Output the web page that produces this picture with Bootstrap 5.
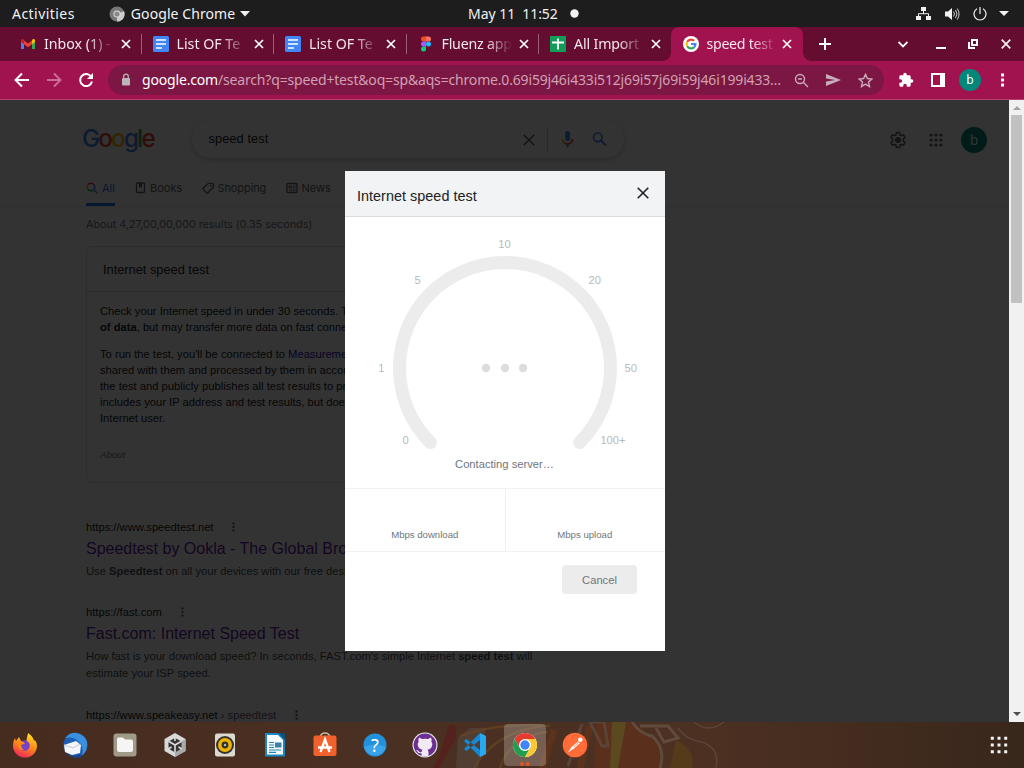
<!DOCTYPE html>
<html lang="en">
<head>
<meta charset="utf-8">
<title>speed test - Google Search</title>
<link href="https://cdn.jsdelivr.net/npm/bootstrap@5.3.0/dist/css/bootstrap.min.css" rel="stylesheet">
<style>
body{width:1024px;height:768px;overflow:hidden;font-family:"Liberation Sans",Arial,sans-serif;font-size:11.2px;line-height:16px;color:#202124;background:#333}
svg{display:block;flex:none}
.ui{font-family:"Noto Sans","Open Sans",sans-serif}
.gs{font-family:Inter,sans-serif}
/* system bar */
.sysbar{height:27px;background:#1d1d1d;color:#f2f2f2;font-size:14px}
.clock{left:468px;top:0;height:27px}
/* tabs */
.tabstrip{height:34px;background:#640d31;padding-left:8px;color:#f3e6ec}
.btab{width:132.5px;padding:0 9.5px 0 12px}
.btab+.btab:before{content:"";position:absolute;left:0;top:7px;height:20px;width:1px;background:#9b6079}
.btab .ttl{width:69px;margin-left:8px;font-size:14.2px;overflow:hidden;white-space:nowrap;-webkit-mask-image:linear-gradient(90deg,#000 64%,transparent 102%);mask-image:linear-gradient(90deg,#000 64%,transparent 102%)}
.btab .x{margin-left:auto}
.btab.on{background:#a0134f;border-radius:8px 8px 0 0;padding-right:11.5px}
.btab.on:before{display:none}
.btab.on:after,.preact:after{content:"";position:absolute;bottom:0;width:8px;height:8px}
.btab.on:after{right:-8px;background:radial-gradient(circle at 100% 0,transparent 7.5px,#a0134f 8px)}
.preact:after{right:0;background:radial-gradient(circle at 0 0,transparent 7.5px,#a0134f 8px)}
/* toolbar */
.toolbar{height:39px;background:#a0134f;border-bottom:1px solid #b8426f;padding:4px 0 4px 14px}
.omni{width:776px;height:30px;border-radius:15px;background:#7b1742;margin-left:14px;padding:0 10px 0 12px}
.url{font-size:14px;letter-spacing:-.17px;color:#d0a0b5;margin-left:10px;width:643px;white-space:nowrap}
.url b{font-weight:400;color:#fff}
.ava{width:22px;height:22px;background:#00897b;color:#fff;font-size:12px;margin-left:14px}
/* page */
.view{height:622px;background:#fff}
.sheet{width:1009px;overflow:hidden}
.shade{inset:0;background:rgba(0,0,0,.8)}
.ghead{height:107px;border-bottom:1px solid #ebebeb;padding-left:82px}
.glogo{font:500 24.2px/30px Inter,sans-serif;letter-spacing:-1.8px;width:110px;color:#4285f4;padding-bottom:2px}
.pill{width:432px;height:37px;border-radius:19px;box-shadow:0 2px 6px 0 rgba(32,33,36,.25);padding:0 17px 0 16.5px;font-size:12.8px}
.gava{width:26px;height:26px;background:#00897b;color:#fff;font-size:14px}
.gnav{font-size:11px;color:#5f6368;height:26px;padding-left:4px}
.gnav span{margin-left:4px}
.gnav .cur{color:#1a73e8;border-bottom:3px solid #1a73e8}
.stats{font-size:10.9px;letter-spacing:-.07px;color:#70757a;padding:8px 0 0 86px;line-height:18px}
.rcard{width:522px;height:237px;margin:13px 0 0 86px;border:1px solid #dadce0;border-radius:6px}
.rcard .hd{height:45px;border-bottom:1px solid #dadce0;font-size:12.8px;padding:2px 0 0 16px}
.rcard .bd{padding:11px 13px;white-space:nowrap}
.rcard p{margin:0 0 11px}
.rcard a{color:#1a0dab;text-decoration:none}
.about{font-size:9.6px;font-style:italic;color:#70757a;margin-top:21px}
.res{margin-left:86px;width:470px}
.res .cite{height:16px}
.res .cite svg{margin-left:19px}
.res h3{font-size:16px;line-height:20px;font-weight:400;color:#681da8;margin:3.5px 0 4px}
.res .sn{color:#4d5156;line-height:17px;white-space:nowrap}
.mdl{width:320px;height:480px;left:345px;top:71px;background:#fff}
.mhead{height:46px;background:#f1f3f4;border-bottom:1px solid #dadce0;font-size:14.4px;letter-spacing:.03px;padding:4px 16px 0 12px}
.mcells{height:64px;border:1px solid #f1f1f1;border-width:1px 0;font-size:9.6px;color:#70757a;padding-right:1px}
.mcells div{padding-bottom:8px}
.mcells div+div{border-left:1px solid #f1f1f1}
.cancel{width:75px;height:29px;background:#ececec;border:0;border-radius:4px;color:#70757a;margin:13px 28px 0 auto;font-size:11.2px;padding:0}
.sbar{width:15px;background:#f1f1f1}
.thumb{width:11px;height:188px;background:#c1c1c1}
/* dock */
.dock{height:46px;background:linear-gradient(90deg,#462b1f,#4a3022 35%,#4c3022 70%,#38271b)}
.dock .it{width:50px;height:46px;z-index:1}
.dock .run{width:42px;height:42px;left:4px;top:2px;border-radius:4px;background:rgba(190,180,170,.36)}
</style>
</head>
<body>
<div class="d-flex flex-column">
<!-- system bar -->
<div class="sysbar ui d-flex align-items-center position-relative">
  <span style="margin-left:12px;letter-spacing:.45px">Activities</span>
  <svg style="margin-left:34px" width="16" height="16" viewBox="0 0 16 16"><circle cx="8" cy="8" r="7.500" fill="#777"/><path d="M8 8 15 5a7.500 7.500 0 0 1-7 10.500z" fill="#ccc"/><circle cx="8" cy="8" r="3.600" fill="#ddd"/><circle cx="8" cy="8" r="2.600" fill="#888"/></svg>
  <span style="margin-left:6px;letter-spacing:.08px">Google Chrome</span>
  <svg style="margin-left:5px" width="10" height="6"><path d="M0 0h10L5 5.500z" fill="#f2f2f2"/></svg>
  <div class="clock position-absolute d-flex align-items-center"><span>May 11</span><span style="margin-left:7px;letter-spacing:-.1px">11:52</span><svg style="margin-left:12px" width="9" height="9"><circle cx="4.500" cy="4.500" r="4.200" fill="#f2f2f2"/></svg></div>
  <div class="ms-auto d-flex align-items-center" style="margin-right:15px">
    <svg width="15" height="14" viewBox="0 0 15 14" fill="#f2f2f2"><path d="M5 0h5v4H5zM0 9h5v4H0zM10 9h5v4h-5z"/><path d="M7.500 4v3M2.500 9V6.700h10V9" stroke="#f2f2f2" fill="none"/></svg>
    <svg style="margin-left:14px" width="15" height="14" viewBox="0 0 15 14"><path d="M0 4.500h3L7 1v12L3 9.500H0z" fill="#f2f2f2"/><path d="M8.500 4.500q2 2.500 0 5M10.500 3q3 4 0 8M12.300 1.500q3.500 5.500 0 11" fill="none" stroke="#ccc"/></svg>
    <svg style="margin-left:13px" width="14" height="14" viewBox="0 0 14 14" fill="none" stroke="#f2f2f2" stroke-width="1.200"><path d="M4 1.800a6 6 0 1 0 6 0M7 0v7"/></svg>
    <svg style="margin-left:12px" width="10" height="5"><path d="M0 0h10L5 5z" fill="#f2f2f2"/></svg>
  </div>
</div>
<!-- tab strip -->
<div class="tabstrip ui d-flex">
  <div class="btab position-relative d-flex align-items-center"><svg width="16" height="16" viewBox="0 0 16 16"><path d="M1 4v9h3V7z" fill="#4285f4"/><path d="M15 4v9h-3V7z" fill="#34a853"/><path d="M4 4.500 8 7.600l4-3.100v3.700L8 11.200 4 8.200z" fill="#ea4335"/><path d="M1 5.900V4q.5-1.600 3-.3v4.500z" fill="#c5221f"/><path d="M15 5.900V4q-.5-1.600-3-.3v4.500z" fill="#fbbc04"/></svg><span class="ttl">Inbox (1) -</span><svg class="x" width="10" height="10"><path d="m1 1 8 8M9 1 1 9" stroke="#fff" stroke-width="1.700"/></svg></div>
  <div class="btab position-relative d-flex align-items-center"><svg width="16" height="16"><rect width="16" height="16" rx="1.500" fill="#4285f4"/><path d="M3 4h10M3 8h10M3 12h6" stroke="#fff" stroke-width="1.700"/></svg><span class="ttl">List OF Te</span><svg class="x" width="10" height="10"><path d="m1 1 8 8M9 1 1 9" stroke="#fff" stroke-width="1.700"/></svg></div>
  <div class="btab position-relative d-flex align-items-center"><svg width="16" height="16"><rect width="16" height="16" rx="1.500" fill="#4285f4"/><path d="M3 4h10M3 8h10M3 12h6" stroke="#fff" stroke-width="1.700"/></svg><span class="ttl">List OF Te</span><svg class="x" width="10" height="10"><path d="m1 1 8 8M9 1 1 9" stroke="#fff" stroke-width="1.700"/></svg></div>
  <div class="btab position-relative d-flex align-items-center"><svg width="16" height="16" viewBox="0 0 16 16"><path d="M8 .5H5.500a2.500 2.500 0 0 0 0 5H8z" fill="#f24e1e"/><path d="M8 .5h2.500a2.500 2.500 0 0 1 0 5H8z" fill="#ff7262"/><path d="M8 5.500H5.500a2.500 2.500 0 0 0 0 5H8z" fill="#a259ff"/><circle cx="10.500" cy="8" r="2.500" fill="#1abcfe"/><path d="M8 10.500H5.500a2.500 2.500 0 1 0 2.500 2.500z" fill="#0acf83"/></svg><span class="ttl" style="letter-spacing:-.2px">Fluenz app</span><svg class="x" width="10" height="10"><path d="m1 1 8 8M9 1 1 9" stroke="#fff" stroke-width="1.700"/></svg></div>
  <div class="btab preact position-relative d-flex align-items-center"><svg width="16" height="16"><rect width="16" height="16" rx="1" fill="#0f9d58"/><path d="M2 6.500h12M8 2.500v11" stroke="#fff" stroke-width="1.800"/></svg><span class="ttl" style="letter-spacing:-.15px">All Import</span><svg class="x" width="10" height="10"><path d="m1 1 8 8M9 1 1 9" stroke="#fff" stroke-width="1.700"/></svg></div>
  <div class="btab on position-relative d-flex align-items-center"><svg width="16" height="16" viewBox="0 0 16 16" fill="none" stroke-width="2.200"><circle cx="8" cy="8" r="8" fill="#fff"/><path d="M4.200 5.800A4.500 4.500 0 0 1 11.200 4.800" stroke="#ea4335"/><path d="M4.200 10.300a4.500 4.500 0 0 1 0-4.600" stroke="#fbbc04"/><path d="M11 11.400a4.500 4.500 0 0 1-6.800-1.100" stroke="#34a853"/><path d="M8 8h4.500a4.500 4.500 0 0 1-1.500 3.400" stroke="#4285f4"/></svg><span class="ttl" style="letter-spacing:-.3px">speed test</span><svg class="x" width="10" height="10"><path d="m1 1 8 8M9 1 1 9" stroke="#fff" stroke-width="1.700"/></svg></div>
  <div class="d-flex align-items-center flex-grow-1" style="padding:0 13px 0 16px">
    <svg width="12" height="12"><path d="M6 0v12M0 6h12" stroke="#fff" stroke-width="2"/></svg>
    <svg class="ms-auto" width="10" height="7"><path d="m.5 1 4.500 4.500L9.500 1" fill="none" stroke="#fff" stroke-width="1.800"/></svg>
    <svg style="margin-left:28px" width="10" height="12"><path d="M0 10h10" stroke="#fff" stroke-width="2"/></svg>
    <svg style="margin-left:22px" width="10" height="10" fill="none" stroke="#fff" stroke-width="2"><path d="M4 1h5v5H4zM1 3v6h6"/></svg>
    <svg style="margin-left:23px" width="10" height="10"><path d="m.7.7 8.600 8.600M9.300.7.7 9.300" stroke="#eee" stroke-width="1.700"/></svg>
  </div>
</div>
<!-- toolbar -->
<div class="toolbar ui d-flex align-items-center">
  <svg width="16" height="16" viewBox="0 0 16 16" fill="none" stroke="#fff" stroke-width="1.900"><path d="M15 8H2M8 1.500 1.500 8 8 14.500"/></svg>
  <svg class="ms-3" width="16" height="16" viewBox="0 0 16 16" fill="none" stroke="#c96f95" stroke-width="1.900"><path d="M1 8h13M8 1.500 14.500 8 8 14.500"/></svg>
  <svg class="ms-3" width="16" height="16" viewBox="0 0 16 16"><path d="M13.200 4.800A6 6 0 1 0 14 9.500" fill="none" stroke="#fff" stroke-width="2"/><path d="M15 1v6H9z" fill="#fff"/></svg>
  <div class="omni d-flex align-items-center">
    <svg width="12" height="14"><path d="M3 5h6a1 1 0 0 1 1 1v5.500a1 1 0 0 1-1 1H3a1 1 0 0 1-1-1V6a1 1 0 0 1 1-1z" fill="#b9b5b9"/><path d="M3.700 6V3.500a2.300 2.300 0 0 1 4.600 0V6" fill="none" stroke="#b9b5b9" stroke-width="1.300"/></svg>
    <span class="url"><b>google.com</b>/search?q=speed+test&amp;oq=sp&amp;aqs=chrome.0.69i59j46i433i512j69i57j69i59j46i199i433…</span>
    <svg style="margin-left:9px" width="15" height="15" fill="none" stroke="#c9acb9" stroke-width="1.400"><circle cx="6" cy="6" r="4.500"/><path d="M9.300 9.300 14 14M4 6h4"/></svg>
    <svg style="margin-left:17px" width="15" height="12"><path d="M0 0 15 6 0 12V7.500L9 6 0 4.500z" fill="#c9acb9"/></svg>
    <svg style="margin-left:17px" width="15" height="15" viewBox="0 0 15 15"><path d="m7.500 1.400 1.900 4.100 4.500.5-3.400 3 1 4.500-4-2.400-4 2.400 1-4.500-3.400-3 4.500-.5z" fill="none" stroke="#c9acb9" stroke-width="1.400"/></svg>
  </div>
  <svg style="margin-left:14px" width="16" height="16" viewBox="0 0 24 24" fill="#fff"><path d="M20.500 11H19V7c0-1.100-.9-2-2-2h-4V3.500a2.500 2.500 0 0 0-5 0V5H4c-1.100 0-2 .9-2 2v3.800h1.500a2.700 2.700 0 0 1 0 5.400H2V20c0 1.100.9 2 2 2h3.800v-1.500a2.700 2.700 0 0 1 5.400 0V22H17c1.100 0 2-.9 2-2v-4h1.500a2.500 2.500 0 0 0 0-5z"/></svg>
  <svg style="margin-left:17px" width="14" height="14"><path d="M1 1h12v12H1z" fill="none" stroke="#fff" stroke-width="2"/><path d="M9 0h5v14H9z" fill="#fff"/></svg>
  <span class="ava rounded-circle d-flex align-items-center justify-content-center">b</span>
  <svg style="margin-left:19px" width="4" height="14" fill="#fff"><path d="M1 .5h3v3H1zM1 5.500h3v3H1zM1 10.500h3v3H1z"/></svg>
</div>
<!-- page -->
<div class="view d-flex">
<div class="sheet position-relative">
  <div class="ghead d-flex flex-column">
    <div class="d-flex align-items-center" style="height:79px;padding-right:22px">
      <div class="glogo">G<span style="color:#ea4335">o</span><span style="color:#fbbc05">o</span>g<span style="color:#34a853">l</span><span style="color:#ea4335">e</span></div>
      <div class="pill d-flex align-items-center"><span style="letter-spacing:.08px;padding-bottom:2px">speed test</span>
        <svg class="ms-auto" width="12" height="12"><path d="m.7.7 10.600 10.600M11.300.7.7 11.300" stroke="#5f6368" stroke-width="1.500"/></svg>
        <svg style="margin-left:12px" width="1" height="24"><path d="M.5 0v24" stroke="#c5c7ca"/></svg>
        <svg style="margin-left:13px" width="13" height="17"><rect x="4.300" width="4.600" height="10" rx="2.300" fill="#4285f4"/><path d="M1.500 8a5 5 0 0 0 2 4" fill="none" stroke="#fbbc04" stroke-width="1.600"/><path d="M3.500 12a5 5 0 0 0 8-4" fill="none" stroke="#ea4335" stroke-width="1.600"/><path d="M6.600 13v3.500" stroke="#34a853" stroke-width="1.700"/></svg>
        <svg style="margin-left:18px" width="15" height="15"><circle cx="5.800" cy="5.300" r="4.300" fill="none" stroke="#4285f4" stroke-width="1.700"/><path d="m9 8.500 5 5" stroke="#4285f4" stroke-width="1.900"/></svg>
      </div>
      <svg class="ms-auto" width="18" height="18" viewBox="0 0 24 24" fill="none" stroke="#5f6368" stroke-width="2"><path d="M10 2h4l.6 3 1.900 1.100 2.900-1 2 3.500-2.300 2v2.800l2.300 2-2 3.500-2.900-1-1.900 1.100-.6 3h-4l-.6-3-1.900-1.100-2.900 1-2-3.500 2.300-2v-2.800l-2.300-2 2-3.500 2.900 1L9.400 5z"/><circle cx="12" cy="12" r="3" fill="#5f6368"/></svg>
      <svg style="margin-left:21.500px" width="14" height="14" fill="#5f6368"><circle cx="2" cy="2" r="1.600"/><circle cx="7" cy="2" r="1.600"/><circle cx="12" cy="2" r="1.600"/><circle cx="2" cy="7" r="1.600"/><circle cx="7" cy="7" r="1.600"/><circle cx="12" cy="7" r="1.600"/><circle cx="2" cy="12" r="1.600"/><circle cx="7" cy="12" r="1.600"/><circle cx="12" cy="12" r="1.600"/></svg>
      <span class="gava ui rounded-circle d-flex align-items-center justify-content-center" style="margin-left:18.500px">b</span>
    </div>
    <div class="gnav gs d-flex mt-auto">
      <div class="cur d-flex" style="width:29px"><svg width="12" height="12" style="margin-top:2px" fill="none" stroke-width="1.500"><path d="M1.700 3A3.800 3.800 0 0 1 8 3" stroke="#ea4335"/><path d="M1.700 7a3.800 3.800 0 0 1 0-4" stroke="#fbbc04"/><path d="M7 8.300A3.800 3.800 0 0 1 1.700 7" stroke="#34a853"/><path d="M8 3a3.800 3.800 0 0 1-.3 4.700l3.600 3.600" stroke="#4285f4"/></svg><span>All</span></div>
      <div class="d-flex" style="margin-left:20px;width:67px"><svg width="11" height="12" style="margin-top:2px"><rect x="1.500" y="1" width="8" height="9.500" rx="1" fill="none" stroke="#5f6368" stroke-width="1.300"/><path d="M4 1h3v5L5.500 4.700 4 6z" fill="#5f6368"/></svg><span>Books</span></div>
      <div class="d-flex" style="width:84px"><svg width="12" height="12" style="margin-top:2px"><path d="M6.500 1.300h3.800q1 0 1 1v3L6 10.700q-.8.700-1.500 0L1.200 7.400q-.7-.8 0-1.500z" fill="none" stroke="#5f6368" stroke-width="1.300"/><circle cx="8.800" cy="3.700" r=".9" fill="#5f6368"/></svg><span style="letter-spacing:-.1px;margin-left:3.500px">Shopping</span></div>
      <div class="d-flex"><svg width="12" height="12" style="margin-top:2px" fill="none" stroke="#5f6368"><rect x="1" y="1.500" width="10" height="9" rx="1" stroke-width="1.300"/><path d="M3 4h2.500v2H3zM7 4h2.500M7 6h2.500M3 8.200h6.500"/></svg><span style="margin-left:3.500px">News</span></div>
    </div>
  </div>
  <div class="stats gs">About 4,27,00,00,000 results (0.35 seconds)</div>
  <div class="rcard">
    <div class="hd d-flex align-items-center">Internet speed test</div>
    <div class="bd"><p>Check your Internet speed in under 30 seconds. The speed test usually transfers less than 40 MB<br><b>of data</b>, but may transfer more data on fast connections.</p>
    <p>To run the test, you'll be connected to <a href="#">Measurement Lab</a> (M-Lab) and your IP address will be<br>shared with them and processed by them in accordance with their privacy policy. M-Lab conducts<br>the test and publicly publishes all test results to promote Internet research. Published information<br>includes your IP address and test results, but doesn't include any other information about you as an<br>Internet user.</p>
    <div class="about">About</div></div>
  </div>
  <div class="res" style="margin-top:36px"><div class="cite d-flex align-items-center">https://www.speedtest.net<svg width="3" height="10" fill="#5f6368"><path d="M.5.500h2v2h-2zM.5 4h2v2h-2zM.5 7.500h2v2h-2z"/></svg></div><h3>Speedtest by Ookla - The Global Broadband Speed Test</h3><div class="sn">Use <b>Speedtest</b> on all your devices with our free desktop and mobile apps.</div></div>
  <div class="res" style="margin-top:24.500px"><div class="cite d-flex align-items-center">https://fast.com<svg width="3" height="10" fill="#5f6368"><path d="M.5.500h2v2h-2zM.5 4h2v2h-2zM.5 7.500h2v2h-2z"/></svg></div><h3>Fast.com: Internet Speed Test</h3><div class="sn">How fast is your download speed? In seconds, FAST.com's simple Internet <b>speed test</b> will<br>estimate your ISP speed.</div></div>
  <div class="res" style="margin-top:25.500px"><div class="cite d-flex align-items-center">https://www.speakeasy.net<span style="color:#5f6368;white-space:pre"> › speedtest</span><svg width="3" height="10" fill="#5f6368"><path d="M.5.500h2v2h-2zM.5 4h2v2h-2zM.5 7.500h2v2h-2z"/></svg></div></div>

  <div class="shade position-absolute"></div>
  <div class="mdl position-absolute">
    <div class="mhead d-flex align-items-center justify-content-between">Internet speed test<svg style="margin-top:-6px" width="12" height="12"><path d="m.7.7 10.600 10.600M11.300.7.7 11.300" stroke="#202124" stroke-width="1.600"/></svg></div>
    <svg width="320" height="271" font-size="11.200" fill="#b9b9b9" text-anchor="middle"><path d="M85.400 225.600A105.500 105.500 0 1 1 234.600 225.600" fill="none" stroke="#ececec" stroke-width="13" stroke-linecap="round"/>
      <g fill="#dadce0"><circle cx="141" cy="151" r="4.200"/><circle cx="160" cy="151" r="4.200"/><circle cx="178" cy="151" r="4.200"/></g>
      <text x="159.500" y="31">10</text><text x="72.500" y="67">5</text><text x="249.800" y="67">20</text><text x="36.300" y="155">1</text><text x="285.800" y="155">50</text><text x="60.500" y="227">0</text><text x="268" y="227">100+</text>
      <text x="159.500" y="251" fill="#70757a">Contacting server…</text></svg>
    <div class="mcells d-flex"><div class="w-50 d-flex align-items-end justify-content-center">Mbps download</div><div class="w-50 d-flex align-items-end justify-content-center">Mbps upload</div></div>
    <button class="cancel d-block">Cancel</button>
  </div>
</div>
<div class="sbar d-flex flex-column align-items-center"><svg width="15" height="15"><path d="M4 10h8L8 6z" fill="#a3a3a3"/></svg><div class="thumb"></div><svg class="mt-auto" width="15" height="15"><path d="M4 5h8L8 9z" fill="#505050"/></svg></div>
</div>
<!-- dock -->
<div class="dock d-flex position-relative overflow-hidden">
  <svg class="position-absolute" style="left:430px;top:0" width="300" height="46" fill="none"><path d="M20 2q-6 14-8 24l-9 20h6l10-18 7-12V4z" fill="#54211c"/><path d="M28 16 40 6h16l-8 40H26z" fill="#54443a" opacity=".7"/><path d="M30 14q40-14 90-10M44 46Q64 10 114 4M70 46Q80 14 118 10" stroke="#654524" stroke-width="2.500" opacity=".7"/><path d="m166 0h36l24 18 6 28h-68z" fill="#5a2f1b"/><path d="M112 46 124 8M150 46 160 4" stroke="#663519" stroke-width="7" opacity=".6"/><path d="M138 44 152 2M160 0l14 0 4 24h-6z" stroke="#5a4a3e" stroke-width="3" opacity=".8"/><path d="M182 0h14l-8 46h-8z" fill="#5b4a20"/><path d="M246 18q20 10 16 28h-22z" fill="#563b1a"/><path d="M202 0q8 12 20 14 14 12 8 32M210 4l28 0 10 12-14 4-8-14" stroke="#5f4a3c" stroke-width="3"/><path d="M248 6q8 12 24 14 18 6 14 26M264 0q14 12 30 0" stroke="#5a4537" stroke-width="1.500"/></svg>
  <div class="it d-flex align-items-center justify-content-center"><svg width="26" height="26"><defs><linearGradient id="ff" x1=".7" y1="0" x2=".3" y2="1"><stop stop-color="#ffe226"/><stop offset=".5" stop-color="#ff8a16"/><stop offset="1" stop-color="#f0215f"/></linearGradient></defs><path d="M3 6l1 3 3-4 2 4 5 1 2-9q5 3 6 8l1-1q2 3 2 6a12 11.500 0 1 1-24 0q0-5 2-8z" fill="url(#ff)"/><circle cx="12.500" cy="13.500" r="5.200" fill="#7542c9"/><path d="M4 9q7-1 9 3-2 0-4 1 0 3 3 5-6 1-8-9z" fill="#ff8a16"/></svg></div>
  <div class="it d-flex align-items-center justify-content-center"><svg width="26" height="26"><circle cx="13.500" cy="13" r="12" fill="#1d5fb4"/><path d="M3 6Q8 0 15 1q8 2 10 9 1 8-5 14 2-8-2-13Q12 4 3 6z" fill="#3a8fe0"/><path d="M2 13 14 9l5 4-1 8-8 2-7-3z" fill="#f3f5f7"/><path d="m2 13 9 3 7-4" fill="none" stroke="#c3ccd6"/><path d="M5 21q7 5 13 1l2 3q-9 3-15-4z" fill="#17468c"/></svg></div>
  <div class="it d-flex align-items-center justify-content-center"><svg width="26" height="26"><rect x="1.500" y="1.500" width="23" height="23" rx="3" fill="#a09a88"/><path d="M6 5.500h5l2 2h6a2 2 0 0 1 2 2V18a2 2 0 0 1-2 2H7a2 2 0 0 1-2-2V7z" fill="#f6f5f3"/></svg></div>
  <div class="it d-flex align-items-center justify-content-center"><svg width="26" height="26"><path d="m13 1 10.500 6v12L13 25 2.500 19V7z" fill="#d9d9d9"/><path d="m13 25 10.500-6V7L13 13z" fill="#a9a9a9"/><path d="m13 6 6.500 3.600v7L13 20.400l-6.500-3.800v-7z" fill="#333"/><path d="M13 13v7.500M13 13 6.500 9.300M13 13l6.500-3.700M13 5v4M6 17l3.500-2M20 17l-3.500-2" stroke="#ddd" stroke-width="1.600"/></svg></div>
  <div class="it d-flex align-items-center justify-content-center"><svg width="26" height="26"><rect x="3" y="1.500" width="20" height="23" rx="2" fill="#ded9cf"/><circle cx="13" cy="13" r="9" fill="#333"/><circle cx="13" cy="13" r="5.200" fill="none" stroke="#f0b400" stroke-width="3.600"/><circle cx="13" cy="13" r="1.200" fill="#bbb"/></svg></div>
  <div class="it d-flex align-items-center justify-content-center"><svg width="26" height="26"><path d="M3 1h15l5 5v18.500H3z" fill="#1c86be"/><path d="M5 3h11l5 5v14.500H5z" fill="#f7fbfd"/><path d="M16 1h7v7z" fill="#0b4f78"/><path d="M7 10.500h5M7 13h5M7 15.500h5M7 18h12M7 20.300h7" stroke="#1c86be" stroke-width="1.200"/><path d="M13 10.500h6.500v5H13z" fill="#3d7fa8"/></svg></div>
  <div class="it d-flex align-items-center justify-content-center"><svg width="26" height="26"><path d="M8 5q1-4 5-4t5 4" fill="none" stroke="#cdbb9a" stroke-width="1.500"/><rect x="1.500" y="3.500" width="23" height="20.500" rx="2" fill="#f0612e"/><path d="M8.500 20 13 7.500 17.500 20M6 15.500h14" fill="none" stroke="#fff" stroke-width="2.300"/></svg></div>
  <div class="it d-flex align-items-center justify-content-center"><svg width="26" height="26"><circle cx="13" cy="13" r="11.500" fill="#2390dc"/><path d="M2 15a11.500 11.500 0 0 0 22 0q-11-5-22 0z" fill="#3aa4ea"/><text x="13" y="19.500" font-size="18" font-family="Noto Sans" text-anchor="middle" fill="#fff">?</text></svg></div>
  <div class="it d-flex align-items-center justify-content-center"><svg width="26" height="26"><circle cx="13" cy="13" r="12.500" fill="#eee"/><circle cx="13" cy="13" r="11.400" fill="#6b2f91"/><path d="M7 5.500 10 7q3-.7 6 0l3-1.500q1 2 .3 4 1.500 2 .7 4.500-.7 3-4.500 3.700 1 1 1 2.500v3.500q-3.500 1.300-7 0v-2.500q-3.500.8-4.500-2.200l-1-1q2-.5 3 1.500 1 1 2.500.4.200-1.500 1-2.200-3.800-.7-4.500-3.700-.8-2.500.7-4.500-.7-2 .3-4z" fill="#f1eaf5"/></svg></div>
  <div class="it d-flex align-items-center justify-content-center"><svg width="26" height="26"><path d="m18 1 6 3v18l-6 3z" fill="#29a8f2"/><path d="M18 1v7L4.500 19 2 17zM18 25v-7L4.500 7 2 9z" fill="#1689d3"/></svg></div>
  <div class="it d-flex align-items-center justify-content-center position-relative"><div class="run position-absolute"></div><svg class="position-relative" width="26" height="26" viewBox="0 0 26 26"><circle cx="13" cy="13" r="12" fill="#fff"/><path d="M2.600 7A12 12 0 0 1 23.400 7H13L7.800 16z" fill="#e33b2e"/><path d="M2.600 7A12 12 0 0 0 13 25l5.200-9H7.800z" fill="#229d4f"/><path d="M23.400 7A12 12 0 0 1 13 25l5.200-9L13 7z" fill="#fcc934"/><circle cx="13" cy="13" r="6" fill="#fff"/><circle cx="13" cy="13" r="4.700" fill="#4285f4"/></svg><svg class="position-absolute" style="left:20px;top:40px" width="10" height="4" fill="#e95420"><circle cx="2" cy="2" r="1.900"/><circle cx="7.800" cy="2" r="1.900"/></svg></div>
  <div class="it d-flex align-items-center justify-content-center"><svg width="26" height="26"><circle cx="13" cy="13" r="12.300" fill="#ff6c37"/><path d="M6 20.500 9.500 15l6.500-5.500 1.800 1.800L12 16.500z" fill="#fff"/><circle cx="18.300" cy="7.800" r="2.300" fill="#fff"/><path d="m11.500 15 5-4.500" stroke="#ff6c37" stroke-width=".8"/></svg></div>
  <div class="it d-flex align-items-center justify-content-center ms-auto"><svg width="18" height="18" fill="#f5f5f5"><path d="M.8.800h3v3h-3zM7.500.800h3v3h-3zM14.200.800h3v3h-3zM.8 7.500h3v3h-3zM7.500 7.500h3v3h-3zM14.200 7.500h3v3h-3zM.8 14.200h3v3h-3zM7.500 14.200h3v3h-3zM14.200 14.200h3v3h-3z"/></svg></div>
</div>
</div>
<script src="https://cdn.jsdelivr.net/npm/bootstrap@5.3.0/dist/js/bootstrap.bundle.min.js"></script>
</body>
</html>
